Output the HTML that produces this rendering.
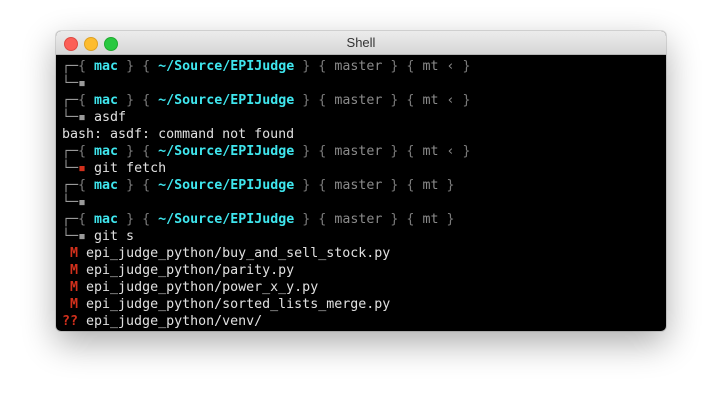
<!DOCTYPE html>
<html><head><meta charset="utf-8"><style>
html,body{margin:0;padding:0;width:722px;height:411px;background:#fff;overflow:hidden}
.win{position:absolute;left:56px;top:31px;width:610px;height:300px;border-radius:5px;overflow:hidden;box-shadow:0 12px 34px rgba(0,0,0,.33),0 0 0 1px rgba(0,0,0,.12);background:#000}
.tb{height:23px;background:linear-gradient(#ececec,#d6d6d6);border-bottom:1px solid #b5b5b5;position:relative;font:13px "Liberation Sans",sans-serif;color:#333;text-align:center;line-height:23px}
.d{position:absolute;top:6px;width:12px;height:12px;border-radius:50%}
.term{padding:3px 0 0 6px;font:13.3px/17px "DejaVu Sans Mono","Liberation Mono",monospace;color:#e0e0e0;white-space:pre}
.c{color:#3fe6ee;font-weight:bold}.g{color:#7a7a7a}.m{color:#8a8a8a}.r{color:#d2301c;font-weight:bold}.b{color:#9a9a9a}
</style></head><body>
<div class="win">
<div class="tb"><span class="d" style="left:8px;background:#fc5f57;border:0.5px solid #de4a42"></span><span class="d" style="left:28px;background:#fdbc2e;border:0.5px solid #dea123"></span><span class="d" style="left:48px;background:#28c840;border:0.5px solid #1eab2f"></span>Shell</div>
<div class="term"><span class="b">┌─</span><span class="g">{</span> <span class="c">mac</span> <span class="g">}</span> <span class="g">{</span> <span class="c">~/Source/EPIJudge</span> <span class="g">}</span> <span class="g">{</span> <span class="m">master</span> <span class="g">}</span> <span class="g">{</span> <span class="m">mt ‹</span> <span class="g">}</span>
<span class="b">└─▪</span>
<span class="b">┌─</span><span class="g">{</span> <span class="c">mac</span> <span class="g">}</span> <span class="g">{</span> <span class="c">~/Source/EPIJudge</span> <span class="g">}</span> <span class="g">{</span> <span class="m">master</span> <span class="g">}</span> <span class="g">{</span> <span class="m">mt ‹</span> <span class="g">}</span>
<span class="b">└─▪</span> asdf
bash: asdf: command not found
<span class="b">┌─</span><span class="g">{</span> <span class="c">mac</span> <span class="g">}</span> <span class="g">{</span> <span class="c">~/Source/EPIJudge</span> <span class="g">}</span> <span class="g">{</span> <span class="m">master</span> <span class="g">}</span> <span class="g">{</span> <span class="m">mt ‹</span> <span class="g">}</span>
<span class="b">└─</span><span class="r">▪</span> git fetch
<span class="b">┌─</span><span class="g">{</span> <span class="c">mac</span> <span class="g">}</span> <span class="g">{</span> <span class="c">~/Source/EPIJudge</span> <span class="g">}</span> <span class="g">{</span> <span class="m">master</span> <span class="g">}</span> <span class="g">{</span> <span class="m">mt</span> <span class="g">}</span>
<span class="b">└─▪</span>
<span class="b">┌─</span><span class="g">{</span> <span class="c">mac</span> <span class="g">}</span> <span class="g">{</span> <span class="c">~/Source/EPIJudge</span> <span class="g">}</span> <span class="g">{</span> <span class="m">master</span> <span class="g">}</span> <span class="g">{</span> <span class="m">mt</span> <span class="g">}</span>
<span class="b">└─▪</span> git s
 <span class="r">M</span> epi_judge_python/buy_and_sell_stock.py
 <span class="r">M</span> epi_judge_python/parity.py
 <span class="r">M</span> epi_judge_python/power_x_y.py
 <span class="r">M</span> epi_judge_python/sorted_lists_merge.py
<span class="r">??</span> epi_judge_python/venv/</div>
</div>
</body></html>
